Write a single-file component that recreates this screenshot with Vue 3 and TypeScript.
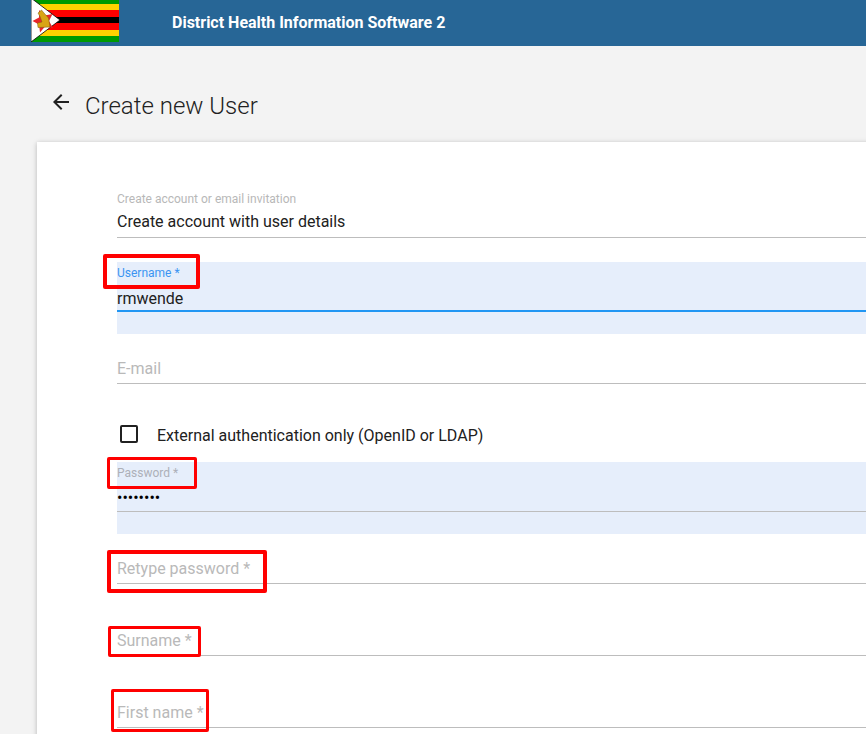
<script setup lang="ts">
interface Mark { id: string; box: string }
const marks: Mark[] = [
  { id: 'username', box: 'left:103px;top:254px;width:97px;height:35px;border-width:4px' },
  { id: 'password', box: 'left:107px;top:457px;width:90px;height:32px;border-width:3px' },
  { id: 'retype', box: 'left:107px;top:550px;width:160px;height:43px;border-width:4px' },
  { id: 'surname', box: 'left:108px;top:626px;width:93px;height:31px;border-width:3px' },
  { id: 'firstname', box: 'left:111px;top:689px;width:98px;height:43px;border-width:3px' },
]
</script>

<template>
  <div class="page">
    <header class="bar">
      <svg class="flag" viewBox="0 0 88 44" aria-label="Flag of Zimbabwe">
        <rect width="88" height="44" fill="#009a00" />
        <rect y="6" width="88" height="32" fill="#ffd200" />
        <rect y="12" width="88" height="20" fill="#f00" />
        <rect y="19" width="88" height="6" fill="#000" />
        <path d="M0 0 L29 22 L0 44 Z" fill="#fff" stroke="#000" stroke-width=".8" />
        <path d="M8 12 L13.5 17.5 L21.5 16 L18 23 L22 30 L14 28.5 L9 34.5 L8 26.5 L1.5 23 L8 19.5 Z" fill="#e8262a" />
        <path d="M7 15 L10.5 12 L13 15 L17.5 20 L19 29 L7 29.5 L6.5 25 L11 24 L9 18.5 Z" fill="#d9a514" stroke="#7a5a10" stroke-width=".5" />
      </svg>
      <span class="brand">District Health Information Software 2</span>
    </header>

    <div class="heading">
      <svg class="back" viewBox="0 0 24 24"><path d="M20 11H7.83l5.59-5.59L12 4l-8 8 8 8 1.41-1.41L7.83 13H20v-2z" /></svg>
      <h1>Create new User</h1>
    </div>

    <section class="card">
      <div class="field first">
        <label class="small">Create account or email invitation</label>
        <div class="value select">Create account with user details</div>
      </div>

      <div class="field filled">
        <label class="small focus">Username *</label>
        <div class="value">rmwende</div>
        <div class="line active"></div>
      </div>

      <div class="field">
        <label class="hint">E-mail</label>
        <div class="line"></div>
      </div>

      <div class="check">
        <span class="box"></span>
        <span class="check-text">External authentication only (OpenID or LDAP)</span>
      </div>

      <div class="field filled">
        <label class="small">Password *</label>
        <div class="value dots">••••••••</div>
        <div class="line"></div>
      </div>

      <div class="field">
        <label class="hint">Retype password *</label>
        <div class="line"></div>
      </div>

      <div class="field">
        <label class="hint">Surname *</label>
        <div class="line"></div>
      </div>

      <div class="field">
        <label class="hint">First name *</label>
        <div class="line"></div>
      </div>
    </section>

    <div v-for="m in marks" :key="m.id" class="mark" :style="m.box"></div>
  </div>
</template>

<style scoped>
.page {
  position: relative;
  width: 866px;
  height: 734px;
  overflow: hidden;
  background: #f3f3f3;
  font-family: Roboto, "Liberation Sans", sans-serif;
  color: #212121;
}
.bar {
  height: 46px;
  background: #276696;
  display: flex;
  align-items: flex-start;
  padding-left: 31px;
  overflow: hidden;
}
.flag {
  width: 88px;
  height: 44px;
  margin-top: -2px;
  flex: none;
}
.brand {
  margin: 14px 0 0 53px;
  font-size: 16px;
  line-height: 18px;
  font-weight: 700;
  color: #fff;
  white-space: nowrap;
}
.heading {
  display: flex;
  align-items: center;
  height: 36px;
  margin: 42px 0 0 49px;
}
.back {
  width: 24px;
  height: 24px;
  margin-top: -8px;
  fill: #212121;
  flex: none;
}
h1 {
  margin: 0 0 0 12px;
  font-size: 24px;
  font-weight: 300;
  line-height: 36px;
  color: #212121;
}
.card {
  margin: 18px 0 0 37px;
  width: 900px;
  height: 620px;
  box-sizing: border-box;
  padding: 46px 0 0 80px;
  background: #fff;
  box-shadow: 0 1px 6px rgba(0, 0, 0, 0.14), 0 1px 4px rgba(0, 0, 0, 0.12);
}
.field {
  position: relative;
  height: 72px;
}
.field.first {
  height: 74px;
}
.field.first .value {
  border-bottom: 1px solid #bdbdbd;
  height: 27px;
}
.filled {
  background: #e6eefb;
}
.small {
  position: absolute;
  left: 0;
  top: 4px;
  font-size: 12px;
  line-height: 14px;
  color: #b8b8b8;
  white-space: nowrap;
}
.small.focus {
  color: #3b94f2;
}
.filled .small:not(.focus) {
  color: #adb0b8;
}
.hint {
  position: absolute;
  left: 0;
  top: 25px;
  font-size: 16px;
  line-height: 20px;
  color: #b9b9b9;
  white-space: nowrap;
}
.value {
  position: absolute;
  left: 0;
  right: 0;
  top: 25px;
  font-size: 16px;
  line-height: 24px;
  color: #212121;
  white-space: nowrap;
}
.value.select {
  top: 22px;
}
.value.dots {
  top: 24px;
  color: #000;
}
.line {
  position: absolute;
  left: 0;
  right: 0;
  top: 49px;
  height: 1px;
  background: #bdbdbd;
}
.line.active {
  top: 48px;
  height: 2px;
  background: #2196f3;
}
.check {
  height: 56px;
  display: flex;
  align-items: center;
  gap: 19px;
  padding-left: 3px;
  font-size: 16px;
  color: #212121;
  box-sizing: border-box;
}
.check-text {
  padding-top: 2px;
}
.box {
  width: 18px;
  height: 18px;
  box-sizing: border-box;
  border: 2px solid #212121;
  border-radius: 2px;
  flex: none;
}
.mark {
  position: absolute;
  box-sizing: border-box;
  border-style: solid;
  border-color: #f00;
  border-radius: 2px;
}
</style>
